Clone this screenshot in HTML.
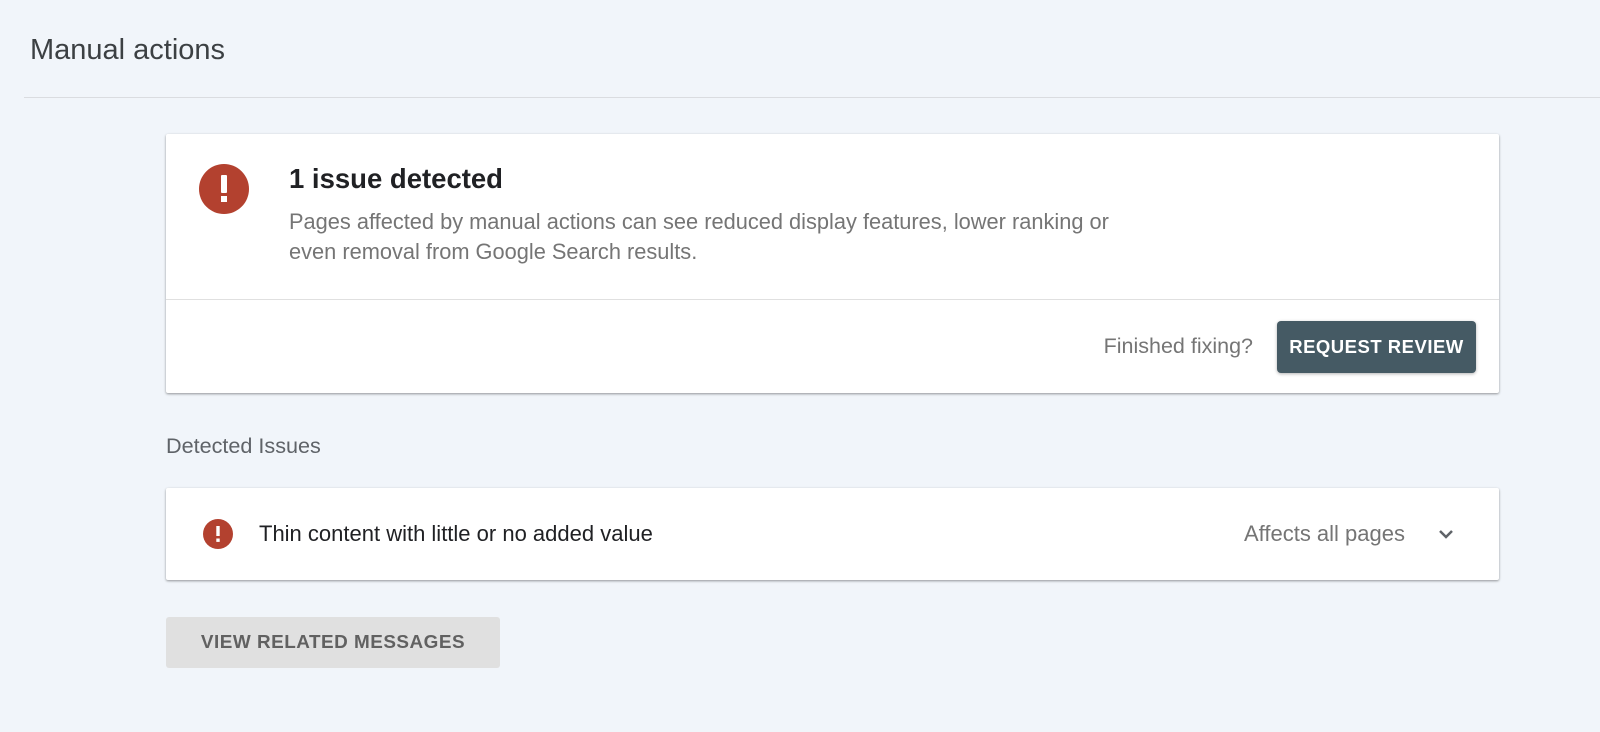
<!DOCTYPE html>
<html><head><style>
body{margin:0;width:1600px;height:732px;background:#f1f5fa;font-family:"Liberation Sans",Arial,sans-serif;position:relative;overflow:hidden}
.a{position:absolute}
.card{position:absolute;left:166px;width:1333px;background:#fff;box-shadow:0 1px 2px rgba(0,0,0,.3),0 1px 3px rgba(0,0,0,.12);border-radius:2px}
</style></head><body>
<div class="a" style="left:30px;top:34px;font-size:29px;color:#3c4043">Manual actions</div>
<div class="a" style="left:24px;top:97px;width:1576px;height:1px;background:#dadce0"></div>
<div class="card" style="top:134px;height:259px">
 <svg class="a" style="left:33px;top:30px" width="50" height="50" viewBox="0 0 50 50"><circle cx="25" cy="25" r="25" fill="#b3412f"/><rect x="22" y="11" width="6" height="18" rx="1" fill="#fff"/><rect x="22" y="32" width="6" height="6" fill="#fff"/></svg>
 <div class="a" style="left:123px;top:29px;font-size:27.5px;font-weight:bold;color:#202124">1 issue detected</div>
 <div class="a" style="left:123px;top:73px;font-size:21.8px;line-height:30px;color:#757575;width:960px">Pages affected by manual actions can see reduced display features, lower ranking or<br>even removal from Google Search results.</div>
 <div class="a" style="left:0;top:165px;width:1333px;height:1px;background:#e0e0e0"></div>
 <div class="a" style="right:246px;top:200px;font-size:21.5px;color:#757575">Finished fixing?</div>
 <div class="a" style="left:1111px;top:187px;width:199px;height:52px;background:#455a64;border-radius:4px;box-shadow:0 1px 3px rgba(0,0,0,.3);color:#fff;font-size:18.5px;font-weight:bold;letter-spacing:.5px;line-height:52px;text-align:center">REQUEST REVIEW</div>
</div>
<div class="a" style="left:166px;top:433px;font-size:21.6px;color:#5f6368">Detected Issues</div>
<div class="card" style="top:488px;height:92px">
 <svg class="a" style="left:37px;top:31px" width="30" height="30" viewBox="0 0 30 30"><circle cx="15" cy="15" r="15" fill="#b3412f"/><rect x="13.3" y="7" width="3.4" height="10" fill="#fff"/><rect x="13.3" y="19.5" width="3.4" height="3.4" fill="#fff"/></svg>
 <div class="a" style="left:93px;top:33px;font-size:22px;color:#202124">Thin content with little or no added value</div>
 <div class="a" style="right:94px;top:33px;font-size:22px;color:#757575">Affects all pages</div>
 <svg class="a" style="left:1271px;top:37px" width="18" height="18" viewBox="0 0 18 18"><path d="M3 6l6 6 6-6" stroke="#5f6368" stroke-width="2.5" fill="none"/></svg>
</div>
<div class="a" style="left:166px;top:617px;width:334px;height:51px;background:#e0e0e0;border-radius:3px;color:#616161;font-size:18.9px;font-weight:bold;letter-spacing:.5px;line-height:51px;text-align:center">VIEW RELATED MESSAGES</div>
</body></html>
